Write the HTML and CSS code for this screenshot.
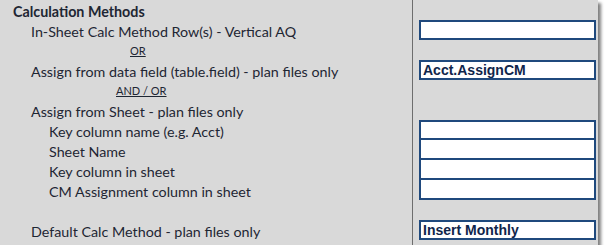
FILE: index.html
```html
<!DOCTYPE html>
<html lang="en">
<head>
	<meta charset="UTF-8">
	<title>Calculation Methods</title>
	<link rel="stylesheet" href="styles.css">
</head>
<body>
	<div class="sheet">
		<div class="labels">
			<div class="row head">Calculation Methods</div>
			<div class="row ind1">In-Sheet Calc Method Row(s) - Vertical AQ</div>
			<div class="row sep"><u class="or">OR</u></div>
			<div class="row ind1">Assign from data field (table.field) - plan files only</div>
			<div class="row sep"><u class="andor">AND / OR</u></div>
			<div class="row ind1">Assign from Sheet - plan files only</div>
			<div class="row ind2">Key column name (e.g. Acct)</div>
			<div class="row ind2">Sheet Name</div>
			<div class="row ind2">Key column in sheet</div>
			<div class="row ind2">CM Assignment column in sheet</div>
			<div class="row"></div>
			<div class="row ind1">Default Calc Method - plan files only</div>
		</div>
		<div class="values">
			<div class="row"></div>
			<div class="row"><div class="cell"></div></div>
			<div class="row"></div>
			<div class="row"><div class="cell">Acct.AssignCM</div></div>
			<div class="row"></div>
			<div class="row"></div>
			<div class="group">
				<div class="cell"></div>
				<div class="cell"></div>
				<div class="cell"></div>
				<div class="cell"></div>
			</div>
			<div class="row"></div>
			<div class="row"><div class="cell">Insert Monthly</div></div>
		</div>
	</div>
</body>
</html>
```

FILE: styles.css
```css
body{margin:0;background:#fff;}
.sheet{display:flex;width:598px;height:245px;background:#d9d9d9;box-shadow:3px 3px 3px rgba(0,0,0,.5);font-family:Lato,"Open Sans",sans-serif;font-size:14.3px;color:#1e2633;}
.labels{width:412px;border-right:1px solid #6e6e6e;}
.row{height:20px;line-height:24px;white-space:nowrap;}
.head{padding-left:13px;font-weight:bold;}
.ind1{padding-left:31px;}
.ind2{padding-left:49px;}
.sep{font-size:11px;line-height:22px;}
.or{margin-left:130px;}
.andor{margin-left:116px;}
.values{flex:1;padding-left:6px;}
.cell{box-sizing:border-box;width:177px;height:20px;background:#fff;border:2px solid #1f497d;padding-left:2px;font-family:"Liberation Sans",Arial,sans-serif;font-weight:bold;font-size:14px;line-height:17px;color:#10254a;}
.group{display:flex;flex-direction:column;}
.group .cell + .cell{margin-top:-2px;height:22px;}
```
